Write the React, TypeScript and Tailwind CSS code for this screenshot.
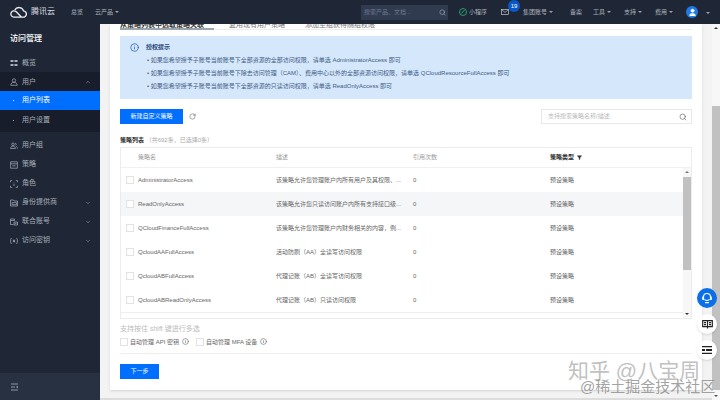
import { ChevronDown, ChevronUp, Info, RotateCw, Search, User, Filter } from 'lucide-react'

const policies = [
  { name: 'AdministratorAccess', desc: '该策略允许您管理账户内所有用户及其权限、...', shade: false },
  { name: 'ReadOnlyAccess', desc: '该策略允许您只读访问账户内所有支持接口级...', shade: true },
  { name: 'QCloudFinanceFullAccess', desc: '该策略允许您管理账户内财务相关的内容，例...', shade: false },
  { name: 'QcloudAAFullAccess', desc: '活动防刷（AA）全读写访问权限', shade: false },
  { name: 'QcloudABFullAccess', desc: '代理记账（AB）全读写访问权限', shade: false },
  { name: 'QcloudABReadOnlyAccess', desc: '代理记账（AB）只读访问权限', shade: false },
]

function NavIcon({ d, fill }: { d: string; fill?: boolean }) {
  return (
    <svg width="8" height="8" viewBox="0 0 8 8" fill={fill ? 'currentColor' : 'none'} stroke={fill ? 'none' : 'currentColor'} strokeWidth="0.7" className="shrink-0">
      <path d={d} />
    </svg>
  )
}

const lowerNav = [
  { label: '用户组', arrow: false, d: 'M3 1a1.300 1.300 0 1 1 0 2.600A1.300 1.300 0 0 1 3 1zM.6 6.500c0-1.500 1-2.400 2.400-2.400s2.400.9 2.400 2.400zM5 1.200c1.400 0 1.600 2 .5 2.400M6 4.400c.9.300 1.500 1 1.500 2.100' },
  { label: '策略', arrow: false, d: 'M.6.800h6.800v6.400H.6zM.6 2.800h6.800M2.400 4.800h3.200' },
  { label: '角色', arrow: false, d: 'M.5 2.200V.6h1.700M5.800.6h1.700v1.600M7.500 5.800v1.600H5.800M2.200 7.400H.5V5.800M3 3h.4M4.600 3H5M3 5h2' },
  { label: '身份提供商', arrow: true, d: 'M.5 1h3l.7 1h3.300v5H.5zM2 3.600h4.500v2H2z' },
  { label: '联合账号', arrow: true, d: 'M.5 1h4v1.500h-4zM.5 2.500v4h3M4 4h3.500v3H4zM5 5.500h1.500' },
  { label: '访问密钥', arrow: true, d: 'M1.400 1C.3 2.800.3 5.200 1.400 7M6.600 1c1.100 1.800 1.100 4.200 0 6M4 2.500v3M2.800 3.200l2.400 1.600M5.200 3.200 2.800 4.800' },
]

function Caret() {
  return <span className="ml-[2px] inline-block border-x-[2px] border-t-[2px] border-x-transparent border-t-[#9aa3b2]" />
}

function TopBar() {
  return (
    <header className="relative z-10 flex h-[24px] shrink-0 items-center bg-[#1f2736] text-[6px] text-[#aeb4bf]">
      <div className="flex w-[71px] shrink-0 items-center gap-[4px] pl-[10px] text-[#d5d9e0]">
        <svg width="17" height="12" viewBox="0 0 17 12" fill="none" stroke="#eceef1" strokeWidth="1.300">
          <path d="M4 11.200h8.800a3.200 3.200 0 0 0 .7-6.400A4.800 4.800 0 0 0 4.800 3.900M4 11.200a3.200 3.200 0 1 1 2.300-5.500l5.300 5.500" />
        </svg>
        <span className="text-[8px]">腾讯云</span>
      </div>
      <span className="w-[24px]">总览</span>
      <span className="flex items-center">云产品<Caret /></span>
      <div className="ml-[242px] flex h-[15px] w-[87px] shrink-0 items-center justify-between bg-[#303b50] pl-[3px] pr-[2px] text-[#6f7a8c]">
        <span>搜索产品、文档...</span>
        <Search size={7} className="text-[#aeb4bf]" />
      </div>
      <div className="ml-[11px] flex items-center gap-[2px]">
        <svg width="8" height="8" viewBox="0 0 8 8" fill="none" stroke="#2bb673" strokeWidth="0.8">
          <circle cx="4" cy="4" r="3.500" />
          <path d="M2.400 5.400C3.800 5.400 3.200 2.600 5.600 2.600" />
        </svg>
        <span>小程序</span>
      </div>
      <div className="relative ml-[14px] flex h-[24px] items-center">
        <svg width="8" height="6" viewBox="0 0 9 7" fill="none" stroke="#c6ccd6" strokeWidth="0.8">
          <rect x="0.5" y="0.5" width="8" height="6" />
          <path d="M0.5 0.5 4.500 4l4-3.500" />
        </svg>
        <span className="absolute left-[7px] top-0 flex h-[12px] w-[12px] items-center justify-center rounded-full bg-[#0a58c8] text-[6px] text-white">19</span>
      </div>
      <span className="ml-[14px] flex items-center">集团账号<Caret /></span>
      <span className="ml-[17px]">备案</span>
      <span className="ml-[11px] flex items-center">工具<Caret /></span>
      <span className="ml-[13px] flex items-center">支持<Caret /></span>
      <span className="ml-[13px] flex items-center">费用<Caret /></span>
      <span className="ml-[13px] flex h-[12px] w-[12px] items-center justify-center rounded-full bg-[#1f7ae8]">
        <User size={9} className="text-white" fill="white" />
      </span>
      <span className="ml-[6px]"><Caret /></span>
    </header>
  )
}

function Sidebar() {
  return (
    <aside className="relative z-10 flex w-[100px] shrink-0 flex-col bg-[#1f2736] text-[7px] text-[#a9afba]">
      <div className="flex h-[29px] items-center pl-[10px] text-[8px] font-bold text-[#e6e8ec]">访问管理</div>
      <div className="flex h-[19px] items-center gap-[4px] pl-[10px] pt-[1px]">
        <NavIcon fill d="M.5 1h3v2h-3zM4.500 1h3v2h-3zM.5 5h3v2h-3zM4.500 5h3v2h-3z" />
        <span>概览</span>
      </div>
      <div className="bg-[#171d2a] pb-[3px]">
        <div className="flex h-[19px] items-center gap-[4px] pl-[10px] pr-[9px] pt-[1px]">
          <NavIcon d="M4 .8a1.700 1.700 0 1 1 0 3.400A1.700 1.700 0 0 1 4 .8zM.8 7.300c0-1.900 1.300-3 3.200-3s3.200 1.100 3.200 3z" />
          <span>用户</span>
          <ChevronUp size={6} className="ml-auto" />
        </div>
        <div className="flex h-[19px] items-center bg-[#006eff] pl-[13px] text-white">
          <span className="mr-[8px] h-[1px] w-[1px] bg-white" />用户列表
        </div>
        <div className="flex h-[19px] items-center pl-[13px] pt-[1px]">
          <span className="mr-[8px] h-[1px] w-[1px] bg-[#a9afba]" />用户设置
        </div>
      </div>
      <nav className="mt-[4px] flex flex-col">
        {lowerNav.map(({ label, arrow, d }) => (
          <div key={label} className="flex h-[19px] items-center gap-[4px] pl-[10px] pr-[9px]">
            <NavIcon d={d} />
            <span>{label}</span>
            {arrow && <ChevronDown size={6} className="ml-auto" />}
          </div>
        ))}
      </nav>
      <div className="mt-auto flex h-[27px] items-center bg-[#273142] pl-[10px]">
        <svg width="9" height="8" viewBox="0 0 9 8" fill="none" stroke="#aab1bd" strokeWidth="0.8">
          <path d="M1 1h7M1 4h4M1 7h7M8 3 6.500 4 8 5" />
        </svg>
      </div>
    </aside>
  )
}

function Table() {
  return (
    <div className="relative mt-[3px] h-[172px] shrink-0 border border-[#ececec] text-[6px] text-[#666]">
      <div className="flex h-[20px] items-center border-b border-[#f0f0f0] text-[#9b9b9b]">
        <span className="w-[155px] shrink-0 pl-[17px]">策略名</span>
        <span className="w-[137px] shrink-0">描述</span>
        <span className="w-[137px] shrink-0">引用次数</span>
        <span className="flex items-center gap-[3px] font-bold text-[#333]">策略类型<Filter size={5} fill="#333" /></span>
      </div>
      <div className="border-b border-[#eee] pr-[8px]">
        {policies.map((p) => (
          <div key={p.name} className={`flex h-[24px] items-center ${p.shade ? 'bg-[#f5f6f8]' : 'bg-white'}`}>
            <span className="ml-[5px] mr-[4px] h-[8px] w-[8px] shrink-0 border border-[#e2e2e2] bg-white" />
            <span className="w-[138px] shrink-0 whitespace-nowrap">{p.name}</span>
            <span className="w-[137px] shrink-0 whitespace-nowrap">{p.desc}</span>
            <span className="w-[137px] shrink-0">0</span>
            <span>预设策略</span>
          </div>
        ))}
      </div>
      <div className="absolute bottom-0 right-0 top-[20px] flex w-[8px] flex-col items-center bg-[#f7f7f7]">
        <span className="mt-[3px] border-x-[2px] border-b-[2px] border-x-transparent border-b-[#777]" />
        <div className="mt-[4px] h-[93px] w-full bg-[#c1c1c1]" />
        <span className="mt-auto mb-[3px] border-x-[2px] border-t-[2px] border-x-transparent border-t-[#333]" />
      </div>
    </div>
  )
}

export default function App() {
  return (
    <div className="relative flex h-[400px] w-[720px] flex-col overflow-hidden bg-[#f3f3f3]" style={{ fontFamily: '"Liberation Sans", "Noto Sans CJK SC", sans-serif' }}>
      <TopBar />
      <div className="flex min-h-0 flex-1">
        <Sidebar />
        <main className="flex min-w-0 flex-1 flex-col overflow-visible">
          <div className="ml-[10px] mr-[10px] flex h-[366px] shrink-0 flex-col bg-white pl-[10px] pr-[10px] shadow-sm">
            <div className="relative -mt-[3px] flex h-[9px] shrink-0 border-b border-[#eee] text-[7px] leading-[8px] text-[#777]">
              <span className="h-[9px] w-[94px] whitespace-nowrap border-b-2 border-[#9aa5ad] font-bold text-[#333]">从策略列表中选取策略关联</span>
              <span className="ml-[15px] w-[56px] whitespace-nowrap">复用现有用户策略</span>
              <span className="ml-[20px] whitespace-nowrap">添加至组获得随组权限</span>
            </div>
            <div className="mt-[6px] h-[63px] shrink-0 bg-[#d5e7fa] pl-[10px] pr-[10px] pt-[7px] text-[6px] text-[#3f5b85]">
              <div className="flex items-center font-bold text-[#27457a]">
                <Info size={9} className="text-[#1a5fc1]" />
                <span className="ml-[7px]">授权提示</span>
              </div>
              <ul className="ml-[17px] mt-[4px] flex flex-col gap-[4px] leading-[9px]">
                <li>• 如果您希望授予子账号当前账号下全部资源的全部访问权限，请单选 AdministratorAccess 即可</li>
                <li>• 如果您希望授予子账号当前账号下除去访问管理（CAM）、费用中心以外的全部资源访问权限，请单选 QCloudResourceFullAccess 即可</li>
                <li>• 如果您希望授予子账号当前账号下全部资源的只读访问权限，请单选 ReadOnlyAccess 即可</li>
              </ul>
            </div>
            <div className="mt-[10px] flex shrink-0 items-center">
              <button className="h-[15px] w-[63px] bg-[#006eff] text-[6px] text-white">新建自定义策略</button>
              <RotateCw size={7} className="ml-[6px] text-[#666]" />
              <div className="ml-auto flex h-[15px] w-[151px] items-center justify-between border border-[#e8e8e8] pl-[6px] pr-[4px] text-[6px] text-[#bbb]">
                <span>支持搜索策略名称/描述</span>
                <Search size={8} className="text-[#666]" />
              </div>
            </div>
            <div className="mt-[12px] h-[8px] shrink-0 text-[6px] leading-[8px] text-[#aaa]">
              <span className="font-bold text-[#333]">策略列表</span> （共692条，已选择0条）
            </div>
            <Table />
            <p className="mt-[5px] text-[7px] leading-[9px] text-[#bbb]">支持按住 shift 键进行多选</p>
            <div className="mt-[5px] flex h-[16px] shrink-0 items-start border-b border-[#eee] text-[6px] leading-[8px] text-[#666]">
              <span className="mr-[2px] h-[8px] w-[8px] border border-[#e2e2e2]" />
              <span>自动管理 API 密钥</span>
              <Info size={7} className="ml-[3px]" />
              <span className="ml-[7px] mr-[2px] h-[8px] w-[8px] border border-[#e2e2e2]" />
              <span>自动管理 MFA 设备</span>
              <Info size={7} className="ml-[3px]" />
            </div>
            <button className="mt-[10px] h-[15px] w-[39px] shrink-0 bg-[#006eff] text-[6px] text-white">下一步</button>
          </div>
          <div className="mt-auto h-[2px] bg-[#dcdcdc]" />
        </main>
        <div className="flex w-[8px] flex-col items-center bg-[#f7f7f7]">
          <span className="mt-[3px] border-x-[2px] border-b-[2px] border-x-transparent border-b-[#333]" />
          <div className="mt-[77px] h-[284px] w-full bg-[#c1c1c1]" />
          <span className="mt-auto mb-[3px] border-x-[2px] border-t-[2px] border-x-transparent border-t-[#555]" />
        </div>
      </div>
      <div className="absolute right-[3px] top-[288px] flex flex-col gap-[6px]">
        <span className="flex h-[20px] w-[20px] items-center justify-center rounded-full bg-[#0a6fe8]">
          <svg width="12" height="12" viewBox="0 0 12 12" fill="none" stroke="white" strokeWidth="1.100" strokeLinecap="round">
            <path d="M2.500 6.500V5a3.500 3.500 0 0 1 7 0v1.500" />
            <path d="M1.800 5h.7v2.400h-.7zM9.500 5h.7v2.400h-.7z" fill="white" />
            <path d="M3.800 7.600c.9 1.200 3.500 1.200 4.400 0M4.500 10.600h3" />
          </svg>
        </span>
        <span className="flex h-[20px] w-[20px] items-center justify-center rounded-full bg-white shadow">
          <svg width="11" height="9" viewBox="0 0 11 9" fill="none" stroke="#222" strokeWidth="1.200">
            <path d="M.7.7h9.600v6H.7zM5.500.7v7.800M2 2.700h2M7 2.700h2M2 4.700h2M7 4.700h2" />
          </svg>
        </span>
        <span className="flex h-[20px] w-[20px] items-center justify-center rounded-full bg-white shadow">
          <svg width="10" height="8" viewBox="0 0 10 8" fill="#222">
            <path d="M0 0h10v1.300H0zM0 3h3v2H0zM4 3h6v2H4zM0 6.700h10V8H0z" />
          </svg>
        </span>
      </div>
      <div className="absolute left-[568px] top-[362px] whitespace-nowrap text-[21px] leading-[17px] text-[#b0b0b0]/80">知乎 @八宝周</div>
      <div className="absolute left-[580px] top-[380px] whitespace-nowrap text-[15px] leading-[14px] text-[#8a8a8a]/80">@稀土掘金技术社区</div>
    </div>
  )
}
